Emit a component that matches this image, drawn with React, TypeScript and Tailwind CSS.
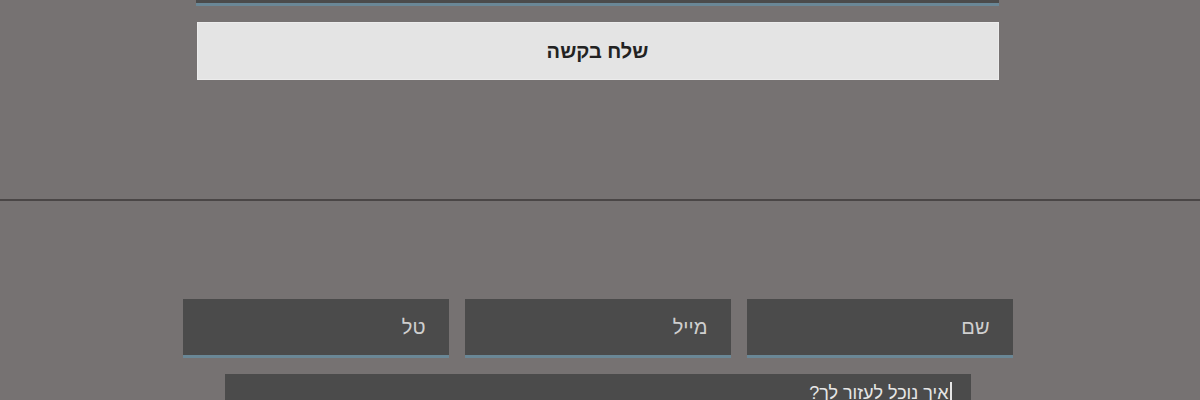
const font = { fontFamily: '"Liberation Sans", "DejaVu Sans", Arial, sans-serif' };

function Field({ placeholder }: { placeholder: string }) {
  return (
    <div className="w-[266px] h-[59px] bg-[#4b4b4b] border-b-[3px] border-[#6a8796] flex items-center pr-[23px]">
      <span className="text-[20px] text-[#cfcfcf]">{placeholder}</span>
    </div>
  );
}

export default function App() {
  return (
    <div dir="rtl" style={font} className="w-[1200px] h-[400px] overflow-hidden bg-[#767272] flex flex-col">
      <div className="h-[201px] shrink-0 border-b-2 border-[#4a4646]">
        <div className="flex flex-col items-center pr-[5px]">
          <div className="w-[803px] h-[6px] bg-[#4b4b4b] border-b-[3px] border-[#6a8796]" />
          <button className="mt-[16px] w-[802px] h-[58px] bg-[#e4e4e4] border border-[#ececec] flex items-center justify-center">
            <span className="text-[20px] font-semibold text-[#222]">שלח בקשה</span>
          </button>
        </div>
      </div>

      <div className="pt-[98px] pr-[5px] shrink-0 flex flex-col items-center">
        <div className="flex gap-4">
          <Field placeholder="שם" />
          <Field placeholder="מייל" />
          <Field placeholder="טל" />
        </div>
        <div className="mt-4 w-[746px] h-[80px] bg-[#4b4b4b] pr-[19px] pt-[6px] flex items-start">
          <span className="inline-block w-[2px] h-[22px] bg-[#e6e6e6] mt-[2px] ml-[1px]" />
          <span className="text-[18px] text-[#e6e6e6]">איך נוכל לעזור לך?</span>
        </div>
      </div>
    </div>
  );
}
